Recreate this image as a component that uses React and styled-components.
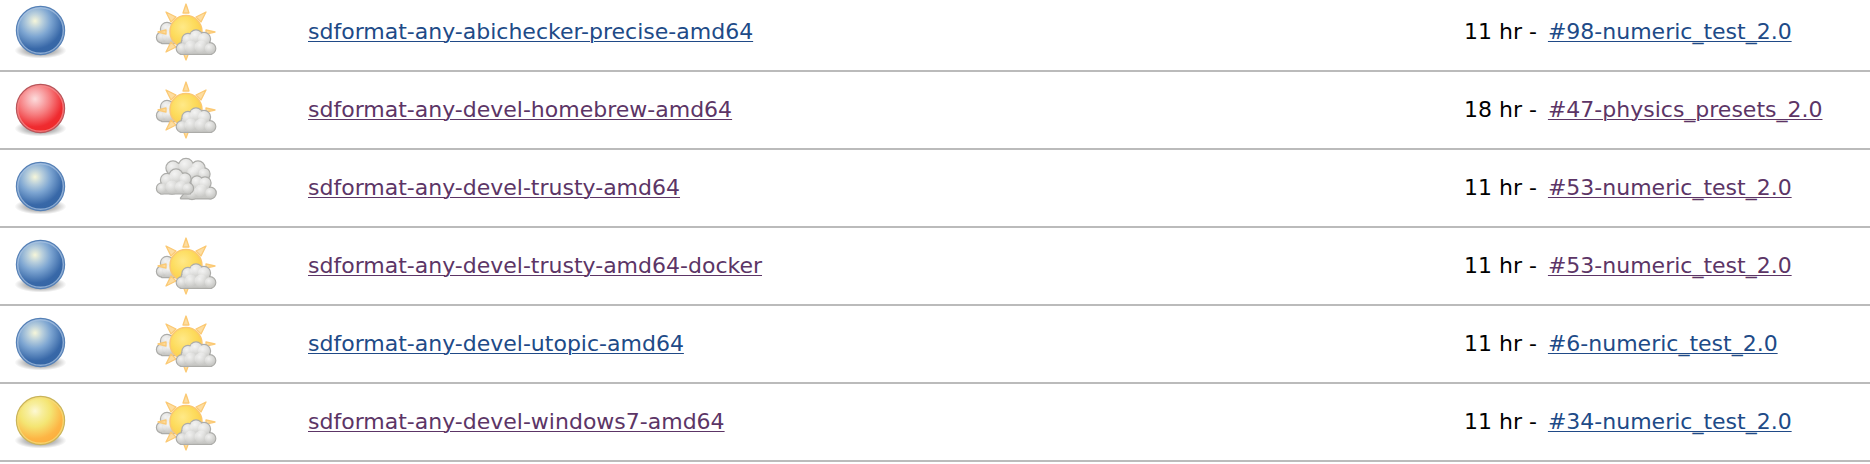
import React, { useId } from "react";
import styled, { createGlobalStyle } from "styled-components";

const GlobalStyle = createGlobalStyle`
  body {
    margin: 0;
    background: #fff;
    color: #000;
    font-family: Verdana, "DejaVu Sans", sans-serif;
    font-size: 22px;
    line-height: 28px;
  }
`;

const JobTable = styled.table`
  width: 100%;
  table-layout: fixed;
  border-collapse: separate;
  border-spacing: 0;
`;

const Column = styled.col`
  width: ${(p) => p.$width || "auto"};
`;

const JobRow = styled.tr`
  &:first-child > td {
    padding-top: 0;
  }
`;

const Cell = styled.td`
  padding: 6px 8px;
  border-bottom: 2px solid #bbb;
  vertical-align: middle;
  white-space: nowrap;
`;

const Icon = styled.svg`
  display: block;
  width: 64px;
  height: 64px;
`;

const JobLink = styled.a`
  color: ${(p) => (p.$seen ? "#5c3566" : "#204a87")};
  text-decoration: underline;
  text-decoration-thickness: 1px;
  text-underline-offset: 2px;
`;

const BuildLink = styled(JobLink)`
  margin-left: 4px;
`;

const BALLS = {
  blue: {
    stops: ["#f6f6da", "#b9cfdc", "#7ea6d2", "#3868a8", "#3465a4"],
    rim: "#5580b6",
    ring: "#a9c3e2",
  },
  red: {
    stops: ["#fcdcdc", "#f9b0b2", "#f67e80", "#ef2b30", "#ef2929"],
    rim: "#b8555a",
    ring: "#f68d8f",
  },
  yellow: {
    stops: ["#fdf8d4", "#f7ee9c", "#f4e573", "#fdb545", "#fdae3c"],
    rim: "#c9b45a",
    ring: "#f6de7c",
  },
};

function Ball({ color }) {
  const id = useId();
  const { stops, rim, ring } = BALLS[color];
  return (
    <Icon viewBox="0 0 64 64" aria-hidden="true">
      <defs>
        <radialGradient id={`${id}b`} gradientUnits="userSpaceOnUse" cx="27" cy="21" r="34">
          <stop offset="0" stopColor={stops[0]} />
          <stop offset="0.22" stopColor={stops[1]} />
          <stop offset="0.46" stopColor={stops[2]} />
          <stop offset="0.82" stopColor={stops[3]} />
          <stop offset="1" stopColor={stops[4]} />
        </radialGradient>
        <radialGradient id={`${id}s`}>
          <stop offset="0" stopColor="#000" stopOpacity="0.5" />
          <stop offset="0.6" stopColor="#000" stopOpacity="0.25" />
          <stop offset="1" stopColor="#000" stopOpacity="0" />
        </radialGradient>
      </defs>
      <ellipse cx="32.5" cy="50.5" rx="26" ry="8" fill={`url(#${id}s)`} />
      <circle cx="32.5" cy="30.5" r="24" fill={`url(#${id}b)`} stroke={rim} strokeWidth="1.4" />
      <circle cx="32.5" cy="30.5" r="22.8" fill="none" stroke={ring} strokeWidth="1.4" strokeOpacity="0.75" />
    </Icon>
  );
}

/* One silhouette outline, a shared vertical shade, and a soft highlight on each puff. */
function Cloud({ lobes, body, top, bottom }) {
  const id = useId();
  const puffs = (props) =>
    lobes.map(([x, y, r]) => <circle key={`${x}-${y}`} cx={x} cy={y} r={r} {...props} />);
  return (
    <g>
      <defs>
        <linearGradient id={`${id}f`} gradientUnits="userSpaceOnUse" x1="0" y1={top} x2="0" y2={bottom}>
          <stop offset="0" stopColor="#dededc" />
          <stop offset="1" stopColor="#c6c6c3" />
        </linearGradient>
        <radialGradient id={`${id}h`} cx="0.38" cy="0.34" r="0.62">
          <stop offset="0" stopColor="#fff" stopOpacity="0.7" />
          <stop offset="1" stopColor="#fff" stopOpacity="0" />
        </radialGradient>
      </defs>
      <g fill="#acaca9" stroke="#acaca9" strokeWidth="2.4" strokeLinejoin="round">
        {puffs()}
        <path d={body} />
      </g>
      <g fill={`url(#${id}f)`}>
        {puffs()}
        <path d={body} />
      </g>
      {puffs({ fill: `url(#${id}h)` })}
    </g>
  );
}

function PartlyCloudy() {
  const id = useId();
  return (
    <Icon viewBox="0 0 64 64" aria-hidden="true">
      <defs>
        <radialGradient id={id} cx="0.4" cy="0.36" r="0.65">
          <stop offset="0" stopColor="#ffe988" />
          <stop offset="0.55" stopColor="#fddc5e" />
          <stop offset="1" stopColor="#fbcd4c" />
        </radialGradient>
      </defs>
      <Cloud
        top={22}
        bottom={44}
        body="M8 32H24V43H8Z"
        lobes={[[13, 29, 6], [20, 32, 8], [8, 37.5, 5], [15, 37, 6]]}
      />
      <g fill="#fddda0" stroke="#fbc974" strokeWidth="1.3" strokeLinejoin="round">
        <path d="M29 13L32 4L35 13Z" />
        <path d="M42 17L52 12L47 22Z" />
        <path d="M52 30L61 32L52 34Z" />
        <path d="M35 52L32 60L29 52Z" />
        <path d="M22 47L12 52L17 42Z" />
        <path d="M12 34L4 32L12 30Z" />
        <path d="M17 22L12 12L22 17Z" />
      </g>
      <circle cx="32" cy="31.5" r="16" fill={`url(#${id})`} stroke="#fbc870" strokeWidth="1.5" />
      <Cloud
        top={30}
        bottom={55}
        body="M28 41L35 37H52L57 47V53.8H27Z"
        lobes={[
          [34, 39.5, 5.5],
          [42, 36.5, 6],
          [50, 39, 6],
          [28, 48.5, 5.2],
          [56, 48.5, 5.2],
          [37, 47, 6.5],
          [47, 47, 6.5],
        ]}
      />
    </Icon>
  );
}

function Overcast() {
  return (
    <Icon viewBox="0 0 64 64" aria-hidden="true">
      <Cloud
        top={3}
        bottom={30}
        body="M16 14L24 8H45L54 20V30H14Z"
        lobes={[[19, 12, 6.5], [32, 10, 7], [44, 12, 6.5], [50, 18, 5.5], [39, 17, 6]]}
      />
      <Cloud
        top={20}
        bottom={43}
        body="M38 28H53L57 36V42.3H27Z"
        lobes={[[43, 26, 5.5], [51, 27, 5.5], [56.5, 37, 5.2], [47, 35, 6.5], [38, 37, 6]]}
      />
      <Cloud
        top={14}
        bottom={38}
        body="M10 24L18 18H30L36 28V37.4H7Z"
        lobes={[[13, 24, 6], [22, 20, 6.5], [31, 23, 5.5], [8, 32.4, 5], [34, 32.4, 5], [18, 31, 6.5], [27, 31, 6]]}
      />
    </Icon>
  );
}

const WEATHER = { partly: PartlyCloudy, overcast: Overcast };

const JOBS = [
  { ball: "blue", weather: "partly", name: "sdformat-any-abichecker-precise-amd64", age: "11 hr", build: "#98-numeric_test_2.0" },
  { ball: "red", weather: "partly", name: "sdformat-any-devel-homebrew-amd64", seen: true, age: "18 hr", build: "#47-physics_presets_2.0", buildSeen: true },
  { ball: "blue", weather: "overcast", name: "sdformat-any-devel-trusty-amd64", seen: true, age: "11 hr", build: "#53-numeric_test_2.0", buildSeen: true },
  { ball: "blue", weather: "partly", name: "sdformat-any-devel-trusty-amd64-docker", seen: true, age: "11 hr", build: "#53-numeric_test_2.0", buildSeen: true },
  { ball: "blue", weather: "partly", name: "sdformat-any-devel-utopic-amd64", age: "11 hr", build: "#6-numeric_test_2.0" },
  { ball: "yellow", weather: "partly", name: "sdformat-any-devel-windows7-amd64", seen: true, age: "11 hr", build: "#34-numeric_test_2.0" },
];

export default function App() {
  return (
    <>
      <GlobalStyle />
      <JobTable>
        <colgroup>
          <Column $width="146px" />
          <Column $width="154px" />
          <Column />
          <Column $width="414px" />
        </colgroup>
        <tbody>
          {JOBS.map((job) => {
            const Weather = WEATHER[job.weather];
            return (
              <JobRow key={job.name}>
                <Cell>
                  <Ball color={job.ball} />
                </Cell>
                <Cell>
                  <Weather />
                </Cell>
                <Cell>
                  <JobLink href="#job" $seen={job.seen}>{job.name}</JobLink>
                </Cell>
                <Cell>
                  {job.age} - <BuildLink href="#build" $seen={job.buildSeen}>{job.build}</BuildLink>
                </Cell>
              </JobRow>
            );
          })}
        </tbody>
      </JobTable>
    </>
  );
}
